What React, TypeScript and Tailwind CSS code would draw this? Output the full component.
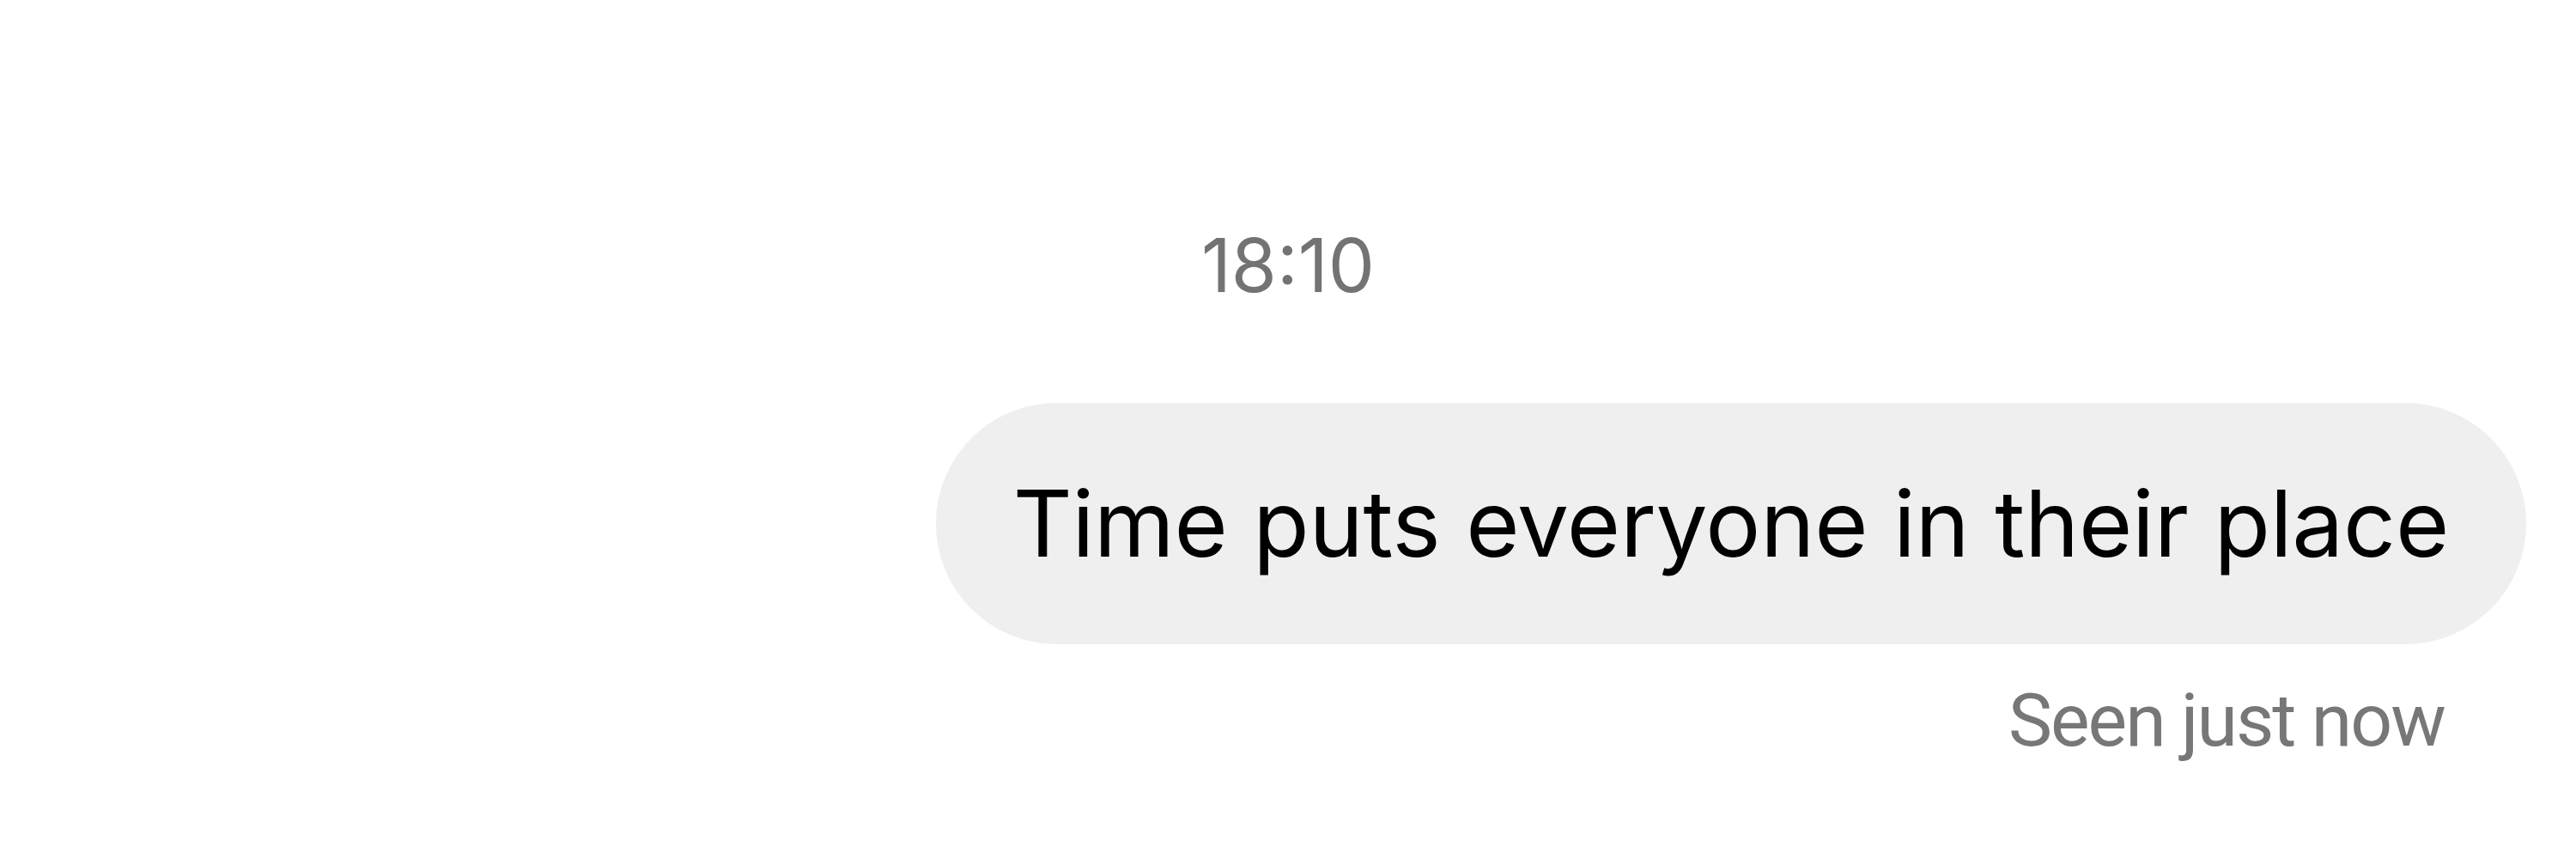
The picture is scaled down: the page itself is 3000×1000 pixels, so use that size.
export default function App() {
  return (
    <div className="w-[3000px] h-[1000px] bg-white flex flex-col font-['Inter',sans-serif]">
      <div className="pt-[266px] text-center text-[86px] leading-none text-[#737373]">18:10</div>
      <div className="mt-[117px] flex justify-end pr-[58px]">
        <div className="h-[281px] flex items-center px-[90px] rounded-full bg-[#efefef] text-[107px] leading-none tracking-[-0.3px] text-black">
          Time puts everyone in their place
        </div>
      </div>
      <div className="mt-[46px] flex justify-end pr-[153px] font-['Roboto',sans-serif] text-[86px] leading-none tracking-[-2px] text-[#777777]">
        Seen just now
      </div>
    </div>
  );
}
